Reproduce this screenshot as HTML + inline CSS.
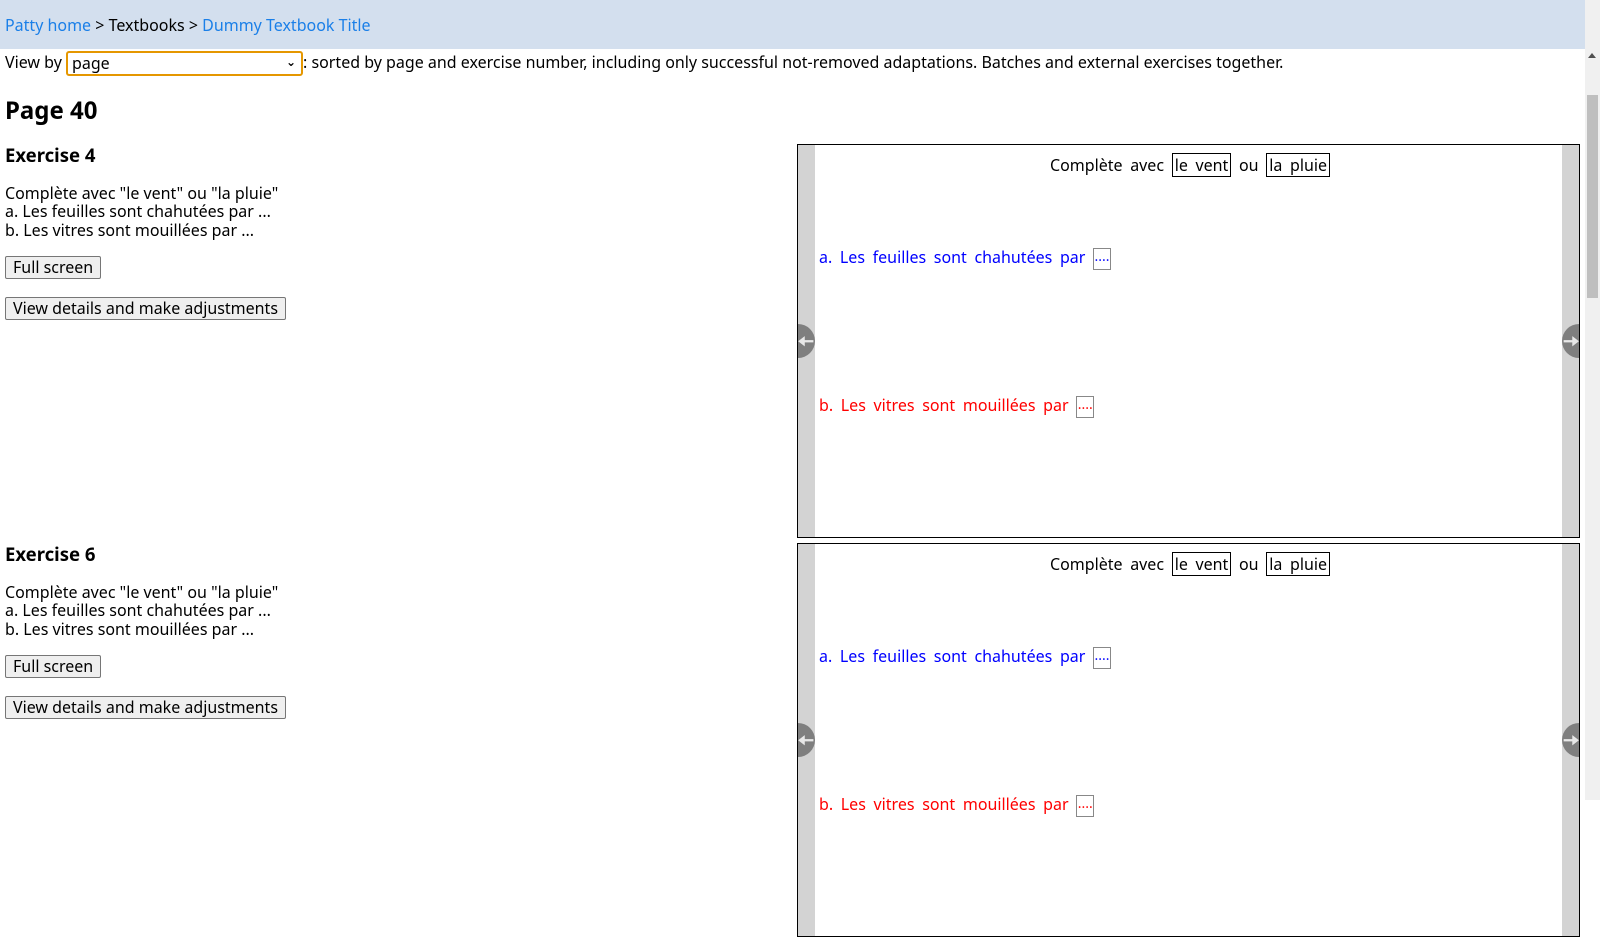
<!DOCTYPE html>
<html><head><meta charset="utf-8"><style>
*{box-sizing:border-box}
body{margin:0;width:1600px;height:800px;overflow:hidden;font-family:"Noto Sans","Liberation Sans","DejaVu Sans",sans-serif;font-size:16px;color:#000;background:#fff;position:relative}
a{color:#1a7fe8;text-decoration:none}
.abs{position:absolute;white-space:nowrap}
.hdr{position:absolute;left:0;top:0;width:1585px;height:49px;background:#d3dfee}
.sb{position:absolute;left:1585px;top:0;width:15px;height:800px;background:#f0f0f0}
.thumb{position:absolute;left:1587px;top:95px;width:11px;height:203px;background:#bfbfbf}
.btn{position:absolute;border:1px solid #767676;border-radius:2px;background:#efefef;padding:0 7px;height:23px;line-height:21px;font-size:16px}
.frame{position:absolute;left:797px;width:783px;height:394px;border:1px solid #000;overflow:hidden}
.bar{position:absolute;top:0;width:17px;height:100%;background:#d3d3d3}
.arr{position:absolute;top:179px;width:34px;height:34px;border-radius:50%;background:#7f7f7f;color:#e8e8e8;font-size:20px;line-height:33px;font-weight:bold}
.box{border:1px solid #000;padding:0 2px}
.blank{display:inline-block;border:1px solid #888;width:18px;height:22px;vertical-align:middle;font-size:14px;line-height:16px;text-align:center;word-spacing:0}
.t{word-spacing:3.5px}
</style></head><body>
<div class="hdr"></div>
<div class="abs" style="left:5px;top:14px"><a>Patty home</a> &gt; Textbooks &gt; <a>Dummy Textbook Title</a></div>
<div class="abs" style="left:5px;top:51px">View by <span style="display:inline-block;width:237px;height:25px;border:2px solid #e59700;border-radius:3px;vertical-align:middle;padding-left:4px;line-height:20px;position:relative">page<span style="position:absolute;right:5px;top:-1px;font-size:12px;font-weight:bold">&#8964;</span></span>: sorted by page and exercise number, including only successful not-removed adaptations. Batches and external exercises together.</div>
<div class="abs" style="left:5px;top:94px;font-size:24px;font-weight:bold">Page 40</div>

<div class="abs" style="left:5px;top:143px;font-size:18.5px;font-weight:bold">Exercise 4</div>
<div class="abs" style="left:5px;top:184px;line-height:18.4px">Complète avec "le vent" ou "la pluie"<br>a. Les feuilles sont chahutées par ...<br>b. Les vitres sont mouillées par ...</div>
<div class="btn" style="left:5px;top:256px">Full screen</div>
<div class="btn" style="left:5px;top:297px">View details and make adjustments</div>

<div class="abs" style="left:5px;top:542px;font-size:18.5px;font-weight:bold">Exercise 6</div>
<div class="abs" style="left:5px;top:583px;line-height:18.4px">Complète avec "le vent" ou "la pluie"<br>a. Les feuilles sont chahutées par ...<br>b. Les vitres sont mouillées par ...</div>
<div class="btn" style="left:5px;top:655px">Full screen</div>
<div class="btn" style="left:5px;top:696px">View details and make adjustments</div>

<div class="frame" style="top:144px">
<div class="bar" style="left:0"></div><div class="bar" style="right:0"></div>
<div class="arr" style="left:-17px;text-align:right;padding-right:1px">&#129060;</div><div class="arr" style="right:-17px;padding-left:1px">&#129062;</div>
<div class="abs t" style="left:252px;top:9px">Complète avec <span class="box">le vent</span> ou <span class="box">la pluie</span></div>
<div class="abs t" style="left:21px;top:101px;color:#0000ff">a. Les feuilles sont chahutées par <span class="blank">....</span></div>
<div class="abs t" style="left:21px;top:249px;color:#ff0000">b. Les vitres sont mouillées par <span class="blank">....</span></div>
</div>
<div class="frame" style="top:543px">
<div class="bar" style="left:0"></div><div class="bar" style="right:0"></div>
<div class="arr" style="left:-17px;text-align:right;padding-right:1px">&#129060;</div><div class="arr" style="right:-17px;padding-left:1px">&#129062;</div>
<div class="abs t" style="left:252px;top:9px">Complète avec <span class="box">le vent</span> ou <span class="box">la pluie</span></div>
<div class="abs t" style="left:21px;top:101px;color:#0000ff">a. Les feuilles sont chahutées par <span class="blank">....</span></div>
<div class="abs t" style="left:21px;top:249px;color:#ff0000">b. Les vitres sont mouillées par <span class="blank">....</span></div>
</div>
<div class="sb"></div><div class="thumb"></div>
<div class="abs" style="left:1588px;top:53px;width:0;height:0;border-left:4.5px solid transparent;border-right:4.5px solid transparent;border-bottom:5px solid #505050"></div>
</body></html>
